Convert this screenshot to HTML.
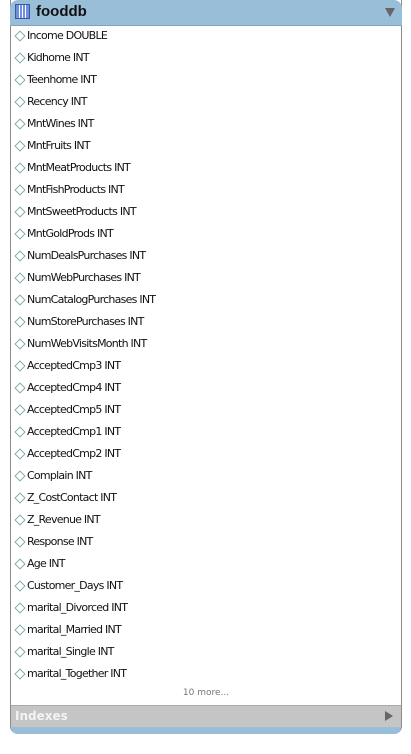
<!DOCTYPE html><html><head><style>
body{margin:0;background:#fff;width:411px;height:754px;overflow:hidden;font-family:"DejaVu Sans","Liberation Sans",sans-serif}
.box{position:absolute;left:10px;top:0;width:390px;height:733px;border:1px solid #8a8a8a;border-top:none;border-radius:0 0 8px 8px;overflow:hidden;background:#fff}
.hd{position:absolute;left:10px;top:0;width:392px;height:25px;background:#98bed8;border-radius:8px 8px 0 0;border-bottom:1px solid #7fa3bd}
.hd .ic{position:absolute;left:5px;top:4px;width:13px;height:13px;border:1px solid #3a55a8;background:linear-gradient(90deg,#6f8fe0 0 3px,#fff 3px 4px,#6f8fe0 4px 6px,#fff 6px 7px,#6f8fe0 7px 9px,#fff 9px 10px,#6f8fe0 10px)}
.hd .t{position:absolute;left:26px;top:3px;font:bold 15px "Liberation Sans",sans-serif;color:#111}
.hd .ar{position:absolute;right:7px;top:8px;width:0;height:0;border-left:5px solid transparent;border-right:5px solid transparent;border-top:9px solid #666}
.r{position:absolute;left:15px;font-size:11px;color:#111;letter-spacing:-0.75px;line-height:14px}
.r:before{content:"";display:inline-block;width:6px;height:6px;border:1px solid #8aa;transform:rotate(45deg);margin:0 3px 1px 1px;vertical-align:middle}
.more{position:absolute;left:10px;width:392px;top:688px;text-align:center;font-size:9px;color:#777}
.ix{position:absolute;left:11px;top:705px;width:390px;height:21px;background:#c5c5c5;border-top:1px solid #aaa;border-bottom:1px solid #aaa}
.ix .t{position:absolute;left:4px;top:3px;font:bold 12px "DejaVu Sans",sans-serif;color:#f4f4f4}
.ix .ar{position:absolute;right:8px;top:5px;border-top:5px solid transparent;border-bottom:5px solid transparent;border-left:8px solid #666}
.bt{position:absolute;left:11px;top:727px;width:390px;height:7px;background:#98bed8;border-radius:0 0 8px 8px}
</style></head><body>
<div class="box"></div>
<div class="hd"><div class="ic"></div><div class="t">fooddb</div><div class="ar"></div></div>
<div class="r" style="top:29px">Income DOUBLE</div>
<div class="r" style="top:51px">Kidhome INT</div>
<div class="r" style="top:73px">Teenhome INT</div>
<div class="r" style="top:95px">Recency INT</div>
<div class="r" style="top:117px">MntWines INT</div>
<div class="r" style="top:139px">MntFruits INT</div>
<div class="r" style="top:161px">MntMeatProducts INT</div>
<div class="r" style="top:183px">MntFishProducts INT</div>
<div class="r" style="top:205px">MntSweetProducts INT</div>
<div class="r" style="top:227px">MntGoldProds INT</div>
<div class="r" style="top:249px">NumDealsPurchases INT</div>
<div class="r" style="top:271px">NumWebPurchases INT</div>
<div class="r" style="top:293px">NumCatalogPurchases INT</div>
<div class="r" style="top:315px">NumStorePurchases INT</div>
<div class="r" style="top:337px">NumWebVisitsMonth INT</div>
<div class="r" style="top:359px">AcceptedCmp3 INT</div>
<div class="r" style="top:381px">AcceptedCmp4 INT</div>
<div class="r" style="top:403px">AcceptedCmp5 INT</div>
<div class="r" style="top:425px">AcceptedCmp1 INT</div>
<div class="r" style="top:447px">AcceptedCmp2 INT</div>
<div class="r" style="top:469px">Complain INT</div>
<div class="r" style="top:491px">Z_CostContact INT</div>
<div class="r" style="top:513px">Z_Revenue INT</div>
<div class="r" style="top:535px">Response INT</div>
<div class="r" style="top:557px">Age INT</div>
<div class="r" style="top:579px">Customer_Days INT</div>
<div class="r" style="top:601px">marital_Divorced INT</div>
<div class="r" style="top:623px">marital_Married INT</div>
<div class="r" style="top:645px">marital_Single INT</div>
<div class="r" style="top:667px">marital_Together INT</div>
<div class="more">10 more...</div>
<div class="ix"><div class="t">Indexes</div><div class="ar"></div></div>
<div class="bt"></div>
</body></html>
